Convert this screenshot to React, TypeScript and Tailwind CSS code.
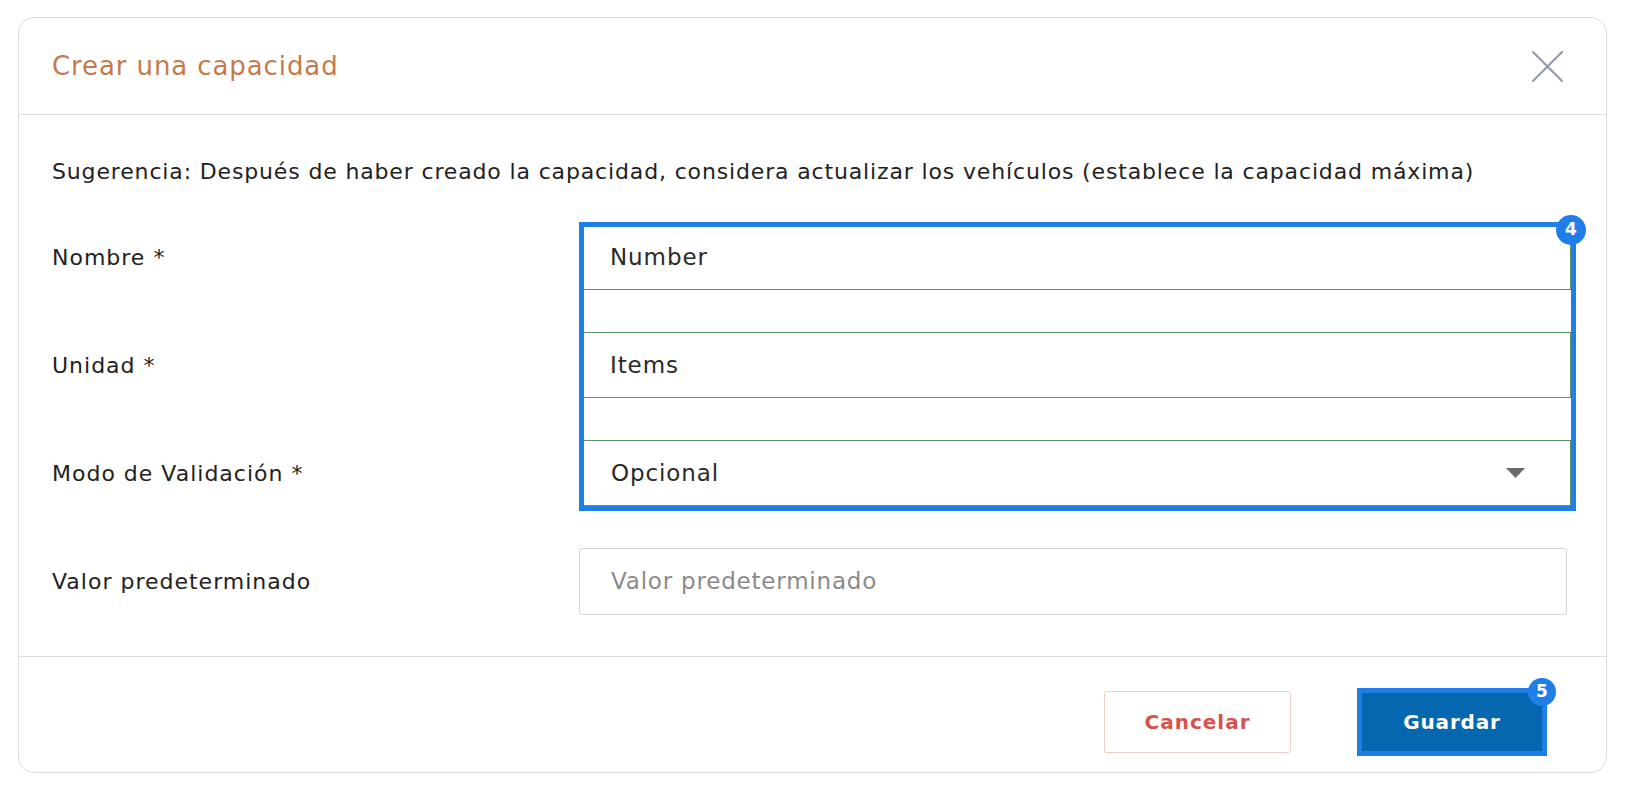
const font = { fontFamily: "'DejaVu Sans', 'Noto Sans', sans-serif" };

const Field = ({ value }: { value: string }) => (
  <div>
    <div className="h-[66px] border border-[#5b9563] bg-white flex items-center pl-[30px] pr-[45px] text-[23px] tracking-[0.9px] text-[#2a2a2a]">
      <span>{value}</span>
    </div>
    <div className="h-[42px]" />
  </div>
);

const Badge = ({ n, className }: { n: number; className: string }) => (
  <span
    className={
      "absolute flex items-center justify-center rounded-full bg-[#1f7fe6] text-white font-bold text-[17px] " +
      className
    }
  >
    {n}
  </span>
);

export default function App() {
  return (
    <div className="min-h-screen bg-white pt-[17px] pl-[18px] pr-[18px]" style={font}>
      <div className="w-[1589px] h-[756px] rounded-[16px] border border-[#dcdcdc] bg-white flex flex-col">
        <div className="h-[97px] shrink-0 flex items-center justify-between pl-[33px] pr-[43px] border-b border-[#dedede]">
          <h1 className="text-[26px] tracking-[0.9px] text-[#c47a4c] font-normal">Crear una capacidad</h1>
          <button className="w-[32px] h-[32px] flex items-center justify-center">
            <svg width="31" height="31" viewBox="0 0 31 31">
              <path d="M1 1 L30 30 M30 1 L1 30" stroke="#9399ae" strokeWidth="2.2" strokeLinecap="round" />
            </svg>
          </button>
        </div>

        <div className="flex-1 pt-[43px] pl-[33px] pr-[20px] border-b border-[#dedede]">
          <p className="text-[22px] leading-[28px] tracking-[0.85px] text-[#222] whitespace-nowrap">
            Sugerencia: Después de haber creado la capacidad, considera actualizar los vehículos (establece la capacidad máxima)
          </p>

          <div className="mt-[38px] flex pr-[15px]">
            <div className="w-[527px] text-[22px] tracking-[1px] text-[#222]">
              {["Nombre *", "Unidad *", "Modo de Validación *", "Valor predeterminado"].map((l) => (
                <div key={l} className="h-[108px]">
                  <div className="h-[66px] flex items-center">{l}</div>
                </div>
              ))}
            </div>

            <div className="flex-1">
              <div className="relative">
                <Field value="Number" />
                <Field value="Items" />
                <div className="h-[66px] border border-[#5b9563] bg-white flex items-center justify-between pl-[31px] pr-[45px] text-[23px] tracking-[0.9px] text-[#2a2a2a]">
                  <span>Opcional</span>
                  <svg width="19" height="10" viewBox="0 0 19 10">
                    <path d="M0 0 L19 0 L9.5 10 Z" fill="#6b6b6b" />
                  </svg>
                </div>
                <div className="absolute left-0 right-[-5px] top-[-2px] bottom-[-5px] border-[5px] border-[#1f7fe6] pointer-events-none" />
                <Badge n={4} className="w-[30px] h-[30px] right-[-15px] top-[-9px]" />
              </div>
              <div className="h-[42px]" />
              <div className="h-[67px] mr-[4px] border border-[#d6d6d6] rounded-[3px] flex items-center pl-[31px] text-[23px] tracking-[0.8px] text-[#8a8a8a]">
                Valor predeterminado
              </div>
            </div>
          </div>
        </div>

        <div className="h-[117px] shrink-0 flex items-center justify-end pt-[13px] pr-[59px] gap-[66px]">
          <button className="w-[187px] h-[62px] rounded-[3px] border border-[#efcfcb] text-[#d4534c] font-bold text-[20px] tracking-[1px]">
            Cancelar
          </button>
          <div className="relative">
            <button className="w-[190px] h-[68px] border-[5px] border-[#1f7fe6] bg-[#0567b0] text-white font-bold text-[20px] tracking-[0.8px]">
              Guardar
            </button>
            <Badge n={5} className="w-[28px] h-[28px] right-[-9px] top-[-10px]" />
          </div>
        </div>
      </div>
    </div>
  );
}
